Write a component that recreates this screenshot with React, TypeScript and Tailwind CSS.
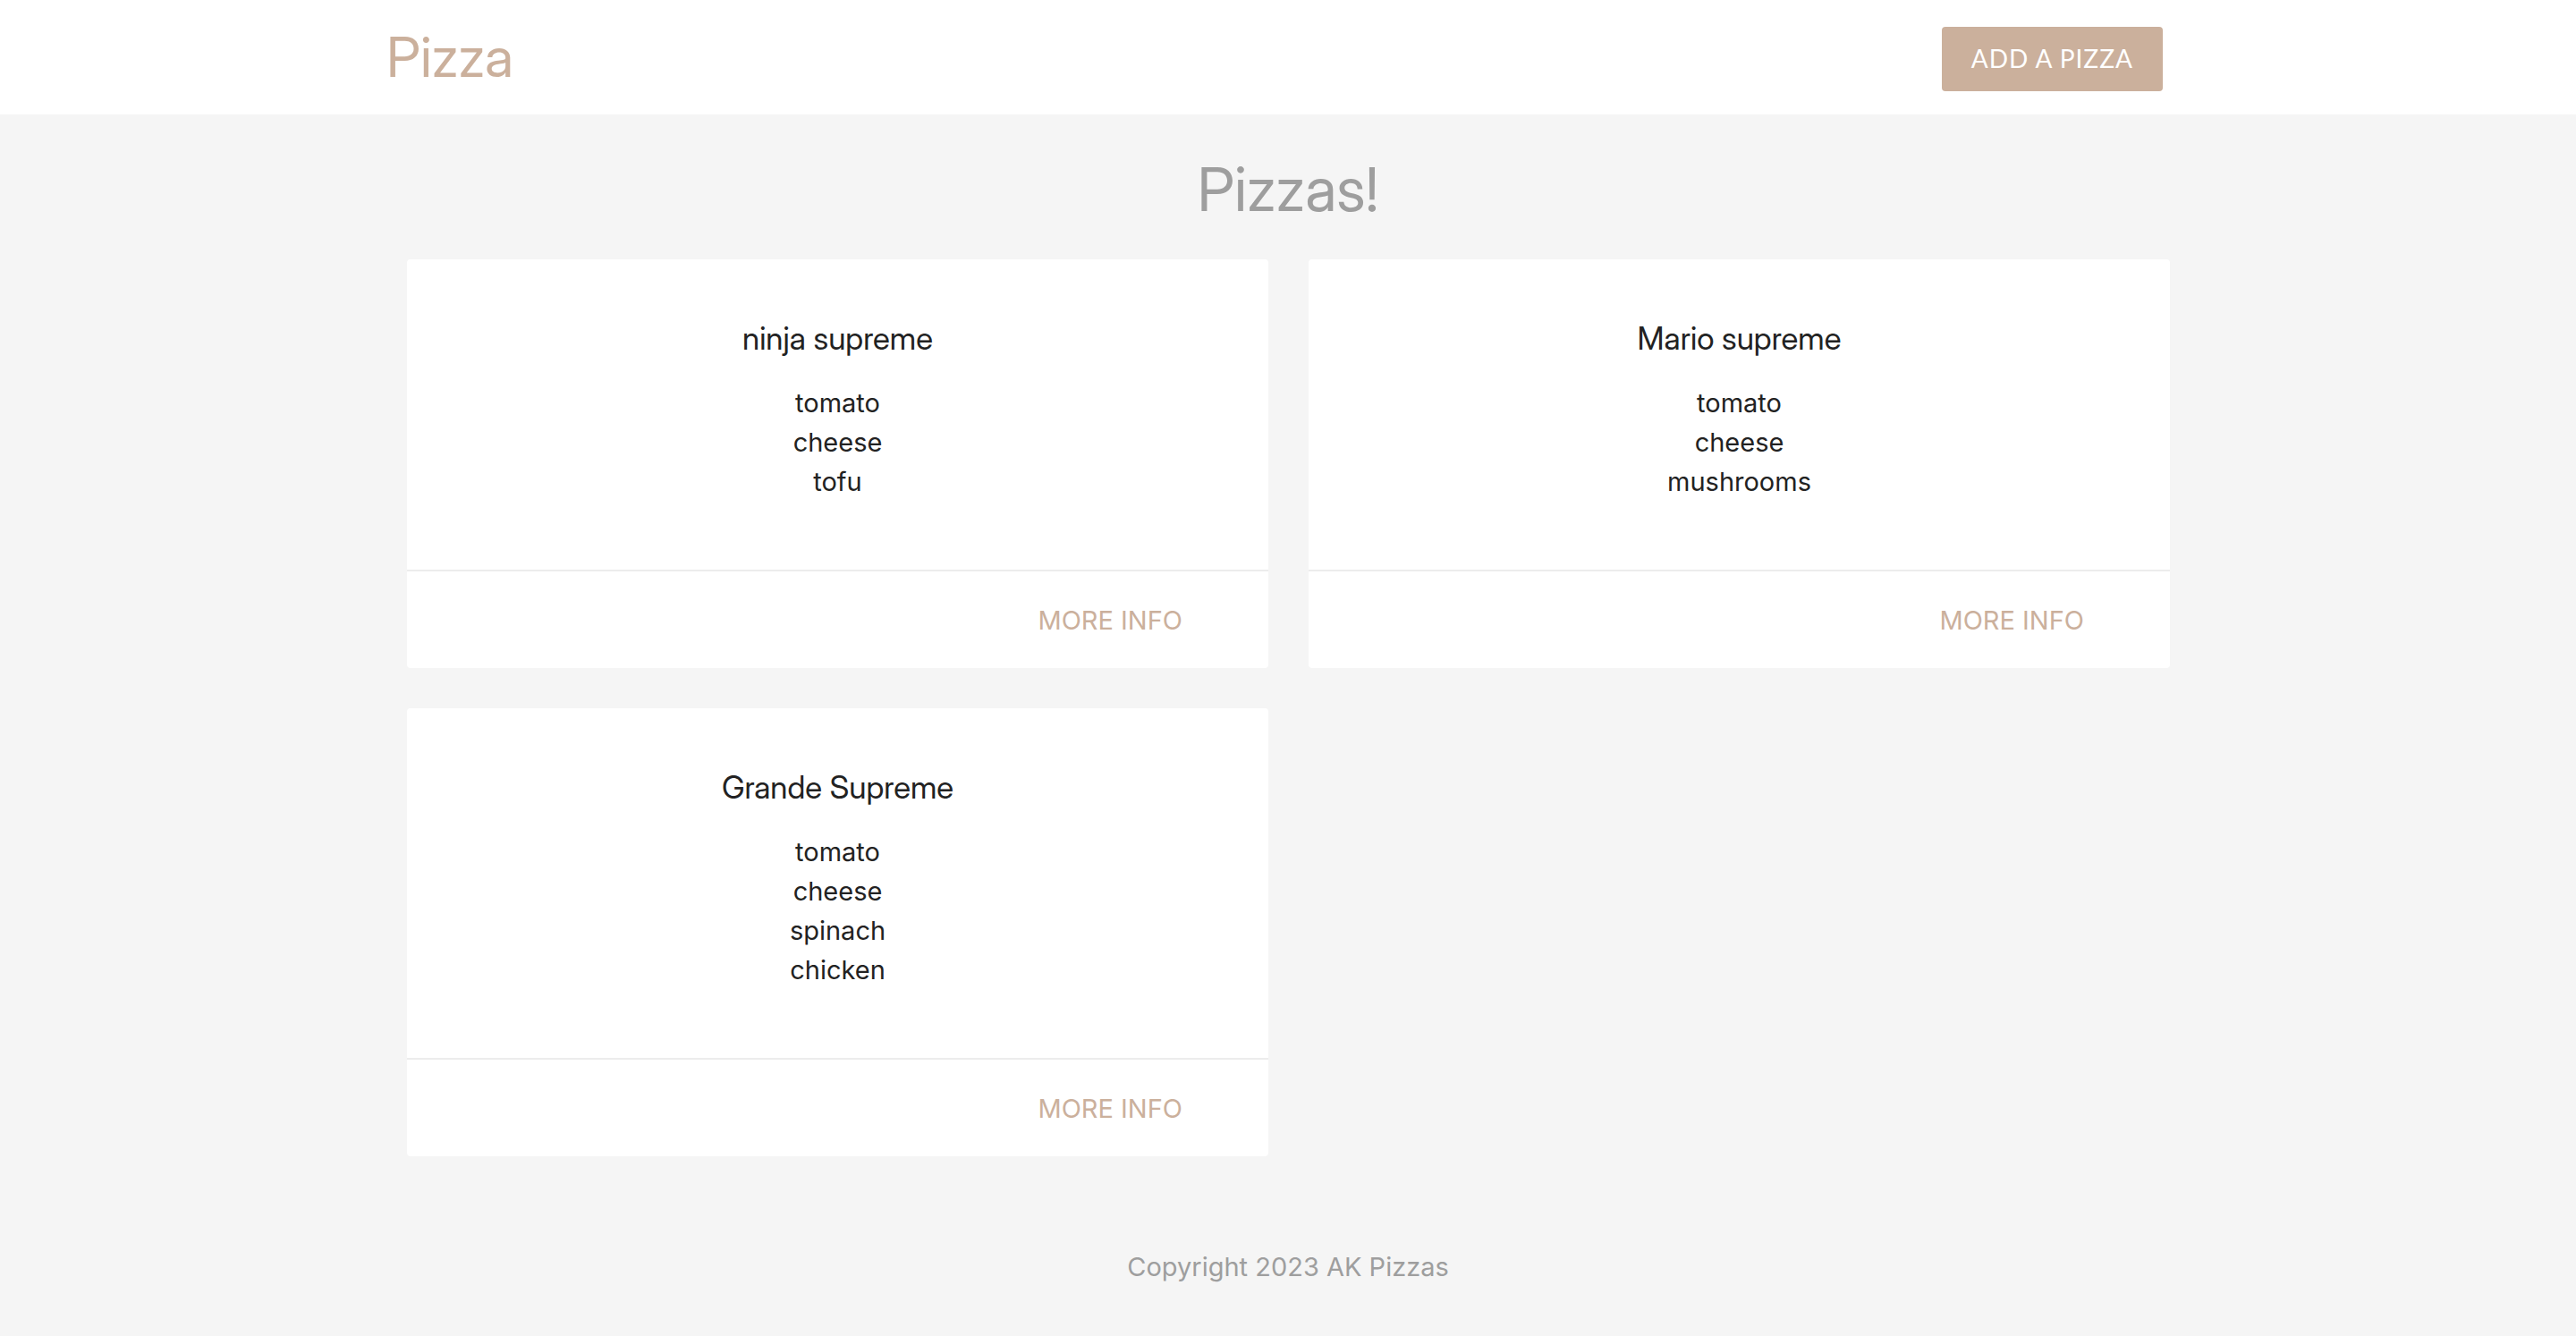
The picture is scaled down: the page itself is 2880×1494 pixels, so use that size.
type Pizza = { title: string; ingredients: string[] };

const pizzas: Pizza[] = [
  { title: 'ninja supreme', ingredients: ['tomato', 'cheese', 'tofu'] },
  { title: 'Mario supreme', ingredients: ['tomato', 'cheese', 'mushrooms'] },
  { title: 'Grande Supreme', ingredients: ['tomato', 'cheese', 'spinach', 'chicken'] },
];

function PizzaCard({ title, ingredients }: Pizza) {
  return (
    <article className="rounded-[4px] bg-white">
      <div className="px-12 pt-[69px] pb-[76px] text-center">
        <h2 className="mb-8 font-['Inter_Display','Inter',sans-serif] text-[35px] leading-[38px]">{title}</h2>
        <ul>
          {ingredients.map((item) => (
            <li key={item}>{item}</li>
          ))}
        </ul>
      </div>
      <div className="border-t-2 border-[#ececec] pt-[33px] pr-24 pb-[31px] pl-12 text-right">
        <a href="#" className="text-[#cbb09c] uppercase">
          more info
        </a>
      </div>
    </article>
  );
}

export default function App() {
  return (
    <div className="min-h-screen bg-[#f5f5f5] font-['Inter',sans-serif] text-[29px] leading-[44px] text-[#222]">
      <nav className="bg-white">
        <div className="mx-auto flex h-32 w-[70%] items-center justify-between">
          <a
            href="#"
            className="font-['Inter_Display','Inter',sans-serif] text-[62px] leading-[128px] text-[#cbb09c]"
          >
            Pizza
          </a>
          <a
            href="#"
            className="mt-1 mr-[30px] rounded-[4px] bg-[#cbb09c] px-[33px] pb-0.5 font-['Lato',sans-serif] text-[28px] leading-[70px] tracking-[1px] text-white uppercase"
          >
            Add a pizza
          </a>
        </div>
      </nav>
      <main className="mx-auto w-[70%]">
        <h1 className="pt-[45px] pb-[41px] text-center font-['Inter_Display','Inter',sans-serif] text-[68px] leading-[76px] text-[#9e9e9e]">
          Pizzas!
        </h1>
        <div className="grid grid-cols-2 items-start gap-[45px] pr-[22px] pl-[23px]">
          {pizzas.map((pizza) => (
            <PizzaCard key={pizza.title} {...pizza} />
          ))}
        </div>
      </main>
      <footer className="pt-[102px] pb-[55px] text-center text-[#9e9e9e]">Copyright 2023 AK Pizzas</footer>
    </div>
  );
}
